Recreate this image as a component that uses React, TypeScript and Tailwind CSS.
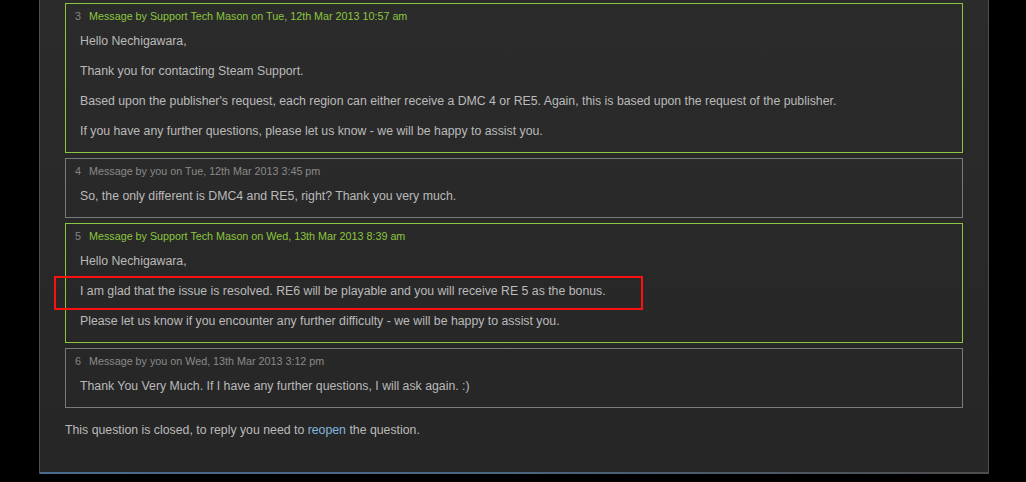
import React from 'react';

type Msg = {
  n: number;
  by: string;
  when: string;
  support: boolean;
  body: string[];
};

const messages: Msg[] = [
  {
    n: 3,
    by: 'Support Tech Mason',
    when: 'Tue, 12th Mar 2013 10:57 am',
    support: true,
    body: [
      'Hello Nechigawara,',
      'Thank you for contacting Steam Support.',
      "Based upon the publisher's request, each region can either receive a DMC 4 or RE5. Again, this is based upon the request of the publisher.",
      'If you have any further questions, please let us know - we will be happy to assist you.',
    ],
  },
  {
    n: 4,
    by: 'you',
    when: 'Tue, 12th Mar 2013 3:45 pm',
    support: false,
    body: ['So, the only different is DMC4 and RE5, right? Thank you very much.'],
  },
  {
    n: 5,
    by: 'Support Tech Mason',
    when: 'Wed, 13th Mar 2013 8:39 am',
    support: true,
    body: [
      'Hello Nechigawara,',
      'I am glad that the issue is resolved. RE6 will be playable and you will receive RE 5 as the bonus.',
      'Please let us know if you encounter any further difficulty - we will be happy to assist you.',
    ],
  },
  {
    n: 6,
    by: 'you',
    when: 'Wed, 13th Mar 2013 3:12 pm',
    support: false,
    body: ['Thank You Very Much. If I have any further questions, I will ask again. :)'],
  },
];

const Message: React.FC<{ msg: Msg }> = ({ msg }) => (
  <div
    className={`border ${msg.support ? 'border-[#8cc63e]' : 'border-[#7a7a7a]'} pb-[12px]`}
  >
    <div className="flex gap-[8px] pl-[9px] pt-[5px] text-[10.75px] leading-[14px]">
      <span className="text-[#858585]">{msg.n}</span>
      <span className={msg.support ? 'text-[#8cc63e]' : 'text-[#8a8a8a]'}>
        Message by {msg.by} on {msg.when}
      </span>
    </div>
    <div className="mt-[9px] flex flex-col gap-[12px] pl-[14px] text-[12.3px] leading-[18px] text-[#bababa]">
      {msg.body.map((p, i) => (
        <p key={i}>{p}</p>
      ))}
    </div>
  </div>
);

export default function App() {
  return (
    <div
      className="relative h-[482px] overflow-hidden bg-black"
      style={{ fontFamily: '"Liberation Sans", Arial, sans-serif' }}
    >
      <div className="ml-[39px] w-[950px] border-x border-[#4f4f4f] bg-gradient-to-b from-[#2b2b2b] to-[#262626]">
        <div className="flex flex-col gap-[5px] px-[25px] pt-[3px]">
          {messages.map((m) => (
            <Message key={m.n} msg={m} />
          ))}
        </div>
        <p className="mt-[13px] pb-[33px] pl-[25px] text-[12.3px] leading-[18px] text-[#bababa]">
          This question is closed, to reply you need to{' '}
          <a href="#" className="text-[#84b6dc]">
            reopen
          </a>{' '}
          the question.
        </p>
        <div className="h-[2px] bg-gradient-to-r from-[#4a6b8d] via-[#4a6580] to-[#4d4d4d]" />
      </div>

      {/* highlight box */}
      <div className="absolute left-[54px] top-[276px] h-[34px] w-[589px] border-2 border-[#ff1010]" />
    </div>
  );
}
